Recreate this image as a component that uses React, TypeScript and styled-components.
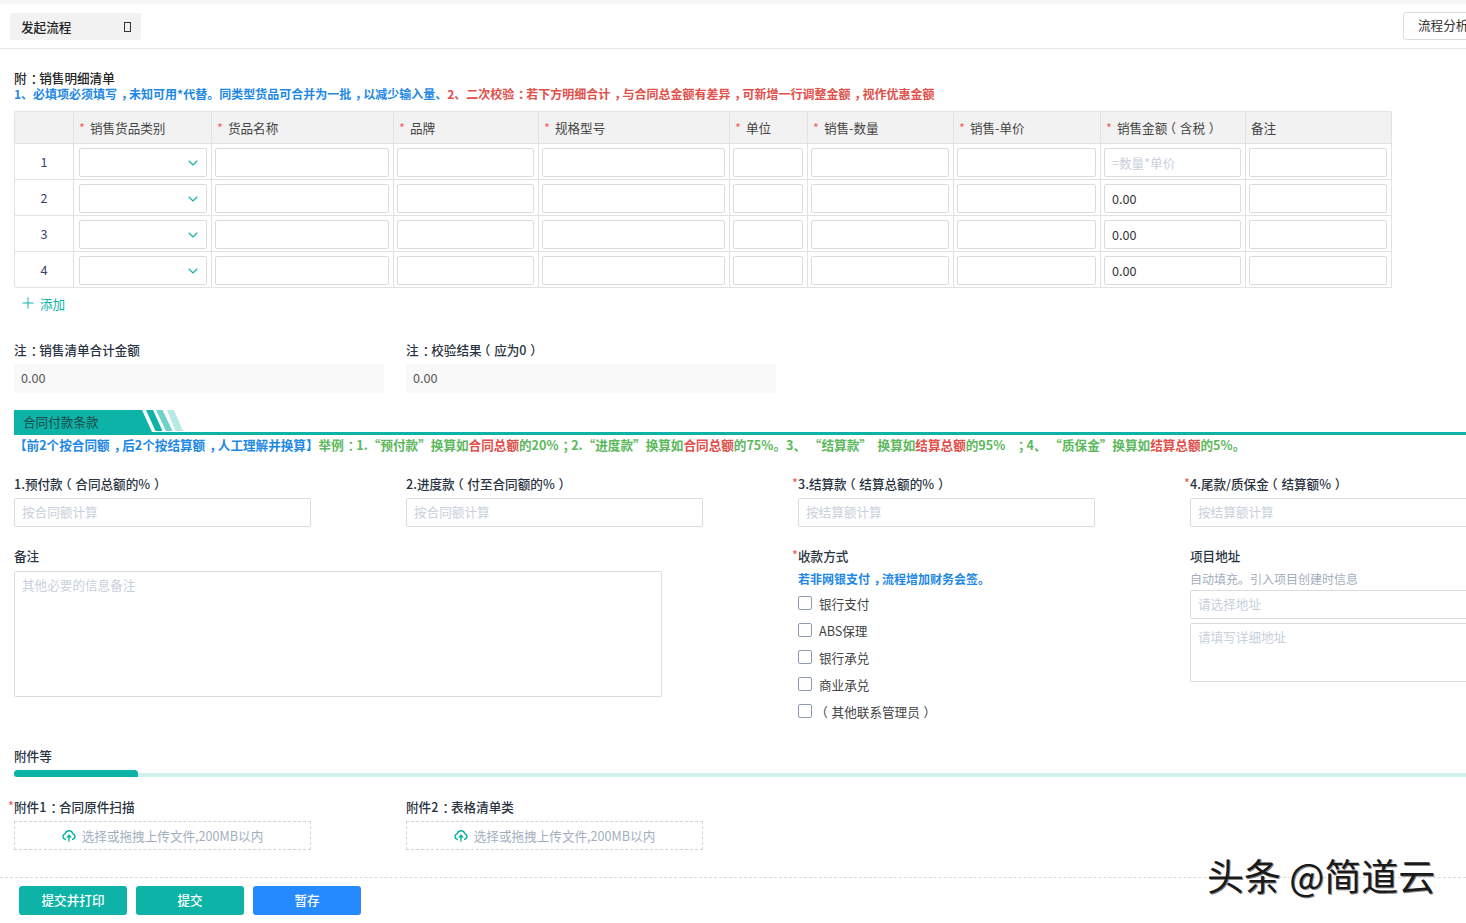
import React from 'react';
import styled, { createGlobalStyle } from 'styled-components';
import { ChevronDown, Plus } from 'lucide-react';

const FONT = '"Noto Sans CJK SC", "Noto Sans", sans-serif';
const TEAL = '#0db3a6';

const GlobalStyle = createGlobalStyle`
  html, body {
    margin: 0;
    padding: 0;
    background: #fff;
    overflow: hidden;
  }
  * {
    box-sizing: border-box;
  }
  body {
    font-family: ${FONT};
    font-size: 12.6px;
    color: #2a3341;
  }
`;

const Page = styled.div`
  position: relative;
  width: 1466px;
  height: 923px;
  overflow: hidden;
  border-top: 4px solid #f7f7f7;
`;

const TopBar = styled.div`
  display: flex;
  justify-content: space-between;
  align-items: flex-start;
  height: 45px;
  padding: 9px 0 0 10px;
  border-bottom: 1px solid #e8e8e8;
  overflow: hidden;
`;

const ActiveTab = styled.div`
  display: flex;
  align-items: center;
  justify-content: space-between;
  width: 131px;
  height: 27px;
  padding: 0 10px 0 11px;
  background: #f2f2f2;
  border-radius: 2px;
  font-weight: 500;
  color: #222;
`;

const TabGlyph = styled.span`
  width: 7px;
  height: 10px;
  border: 1px solid #333;
`;

const AnalysisButton = styled.div`
  flex: none;
  width: 80px;
  height: 28px;
  margin: -1px -17px 0 0;
  padding-left: 14px;
  border: 1px solid #dcdcdc;
  border-radius: 3px 0 0 3px;
  line-height: 24px;
  white-space: nowrap;
  overflow: hidden;
  color: #333;
`;

const Body = styled.div`
  padding: 20px 0 0 14px;
`;

const SectionTitle = styled.div`
  height: 17px;
  line-height: 17px;
  font-weight: 500;
  color: #222;
`;

const Note = styled.div`
  height: 16px;
  line-height: 16px;
  font-size: 12px;
  font-weight: 700;
  white-space: nowrap;
  color: #e04f4a;
`;

const Blue = styled.span`
  color: #1e88e5;
`;

const Green = styled.span`
  color: #5cb85c;
`;

const Red = styled.span`
  color: #e04f4a;
`;

// full-width punctuation sits centred in its cell in the reference
const Mark = styled.span<{ $shift: number }>`
  display: inline-block;
  transform: translateX(${(p) => p.$shift}em);
`;

const Table = styled.div`
  display: grid;
  grid-template-columns: 59px 138px 182px 145px 191px 78px 146px 147px 145px 146px;
  grid-template-rows: 32px repeat(4, 36px);
  width: 1378px;
  margin-top: 9px;
  border-top: 1px solid #e2e2e2;
  border-left: 1px solid #e2e2e2;
  border-radius: 2px;
`;

const HeadCell = styled.div`
  display: flex;
  align-items: center;
  padding-left: 5px;
  background: #f2f2f2;
  border-right: 1px solid #e2e2e2;
  border-bottom: 1px solid #e2e2e2;
  white-space: nowrap;
  color: #444;
`;

const HeadStar = styled.span`
  color: #ef5f5a;
  margin-right: 5px;
`;

const IndexCell = styled.div`
  display: flex;
  align-items: center;
  justify-content: center;
  border-right: 1px solid #e2e2e2;
  border-bottom: 1px solid #e2e2e2;
  color: #3a3f6b;
`;

const InputCell = styled.div<{ $first?: boolean }>`
  padding: 4px 4px 0 ${(p) => (p.$first ? 5 : 3)}px;
  border-right: 1px solid #e2e2e2;
  border-bottom: 1px solid #e2e2e2;
`;

const CellBox = styled.div<{ $muted?: boolean }>`
  display: flex;
  align-items: center;
  justify-content: space-between;
  height: 29px;
  padding: 0 7px;
  border: 1px solid #dcdcdc;
  border-radius: 2px;
  color: ${(p) => (p.$muted ? '#c8d0dc' : '#333')};
`;

const SelectArrow = styled(ChevronDown)`
  margin-right: -2px;
`;

const AddRow = styled.div`
  display: flex;
  align-items: center;
  gap: 3px;
  height: 30px;
  padding-left: 5px;
  color: ${TEAL};
`;

const TotalsRow = styled.div`
  display: flex;
  gap: 22px;
  margin-top: 22px;
`;

const TotalField = styled.div`
  width: 370px;
`;

const Label = styled.div<{ $required?: boolean }>`
  position: relative;
  height: 20px;
  line-height: 20px;
  font-weight: 500;
  white-space: nowrap;
  color: #2a3341;

  &::before {
    content: ${(p) => (p.$required ? "'*'" : 'none')};
    position: absolute;
    left: -6px;
    top: -1px;
    color: #ef4f4a;
    font-weight: 400;
  }
`;

const ReadOnly = styled.div`
  height: 29px;
  margin-top: 4px;
  padding-left: 7px;
  line-height: 28px;
  background: #f9f9f9;
  color: #555;
`;

const BandRow = styled.div`
  display: flex;
  align-items: flex-start;
  height: 25px;
  margin-top: 17px;
  border-bottom: 3px solid ${TEAL};
`;

const BandTitle = styled.div`
  width: 138px;
  height: 22px;
  padding-left: 9px;
  line-height: 24px;
  background: ${TEAL};
  clip-path: polygon(0 0, 128px 0, 138px 100%, 0 100%);
  color: #1d4a4a;
`;

const BandStripes = styled.svg`
  flex: none;
  width: 40px;
  height: 22px;
  margin-left: -8px;
`;

const Hint = styled.div`
  height: 20px;
  line-height: 20px;
  font-weight: 700;
  white-space: pre;
`;

const FieldGrid = styled.div`
  display: grid;
  grid-template-columns: repeat(4, 392px);
  margin-top: 19px;
  width: 1568px;
`;

const TextBox = styled.div<{ $wide?: boolean }>`
  width: ${(p) => (p.$wide ? 400 : 297)}px;
  height: 29px;
  margin-top: 4px;
  padding-left: 7px;
  line-height: 26px;
  border: 1px solid #dcdcdc;
  border-radius: 2px;
  color: #c8d0dc;
`;

const RemarksRow = styled.div`
  display: grid;
  grid-template-columns: repeat(4, 392px);
  margin-top: 19px;
  width: 1568px;
  height: 180px;
`;

const AreaBox = styled.div<{ $w: number; $h: number }>`
  width: ${(p) => p.$w}px;
  height: ${(p) => p.$h}px;
  padding: 3px 7px;
  line-height: 20px;
  border: 1px solid #dcdcdc;
  border-radius: 2px;
  color: #c8d0dc;
  white-space: nowrap;
`;

const RemarksAreaWrap = styled.div`
  margin-top: 5px;
`;

const BlueHint = styled.div`
  height: 16px;
  margin-top: 5px;
  line-height: 16px;
  font-size: 12px;
  font-weight: 700;
  color: #1e88e5;
`;

const GreyHint = styled.div`
  height: 16px;
  margin-top: 5px;
  line-height: 16px;
  font-size: 12px;
  color: #a3aebd;
`;

const CheckList = styled.div`
  display: flex;
  flex-direction: column;
  gap: 9px;
  margin-top: 7px;
`;

const CheckRow = styled.div`
  display: flex;
  align-items: center;
  gap: 7px;
  height: 18px;
  color: #444;
  white-space: nowrap;
`;

const CheckBox = styled.span`
  flex: none;
  width: 14px;
  height: 14px;
  border: 1px solid #8f9bb3;
  border-radius: 2px;
`;

const AddressInput = styled(TextBox)`
  margin-top: 3px;
`;

const AddressArea = styled(AreaBox)`
  margin-top: 4px;
`;

const AttachTitle = styled(Label)`
  margin-top: 20px;
`;

const AttachBand = styled.div`
  height: 7px;
  margin-top: 4px;
  background: linear-gradient(to bottom, transparent 3px, #cff0ec 3px);
`;

const AttachBandFill = styled.div`
  width: 124px;
  height: 7px;
  background: ${TEAL};
  border-radius: 4px 4px 0 4px;
`;

const UploadGrid = styled.div`
  display: grid;
  grid-template-columns: repeat(2, 392px);
  margin-top: 20px;
`;

const UploadBox = styled.div`
  display: flex;
  align-items: center;
  justify-content: center;
  gap: 6px;
  width: 297px;
  height: 29px;
  margin-top: 4px;
  border: 1px dashed #d4d4d4;
  color: #a3aebd;
`;

const Footer = styled.div`
  display: flex;
  gap: 9px;
  margin-top: 27px;
  padding: 8px 0 0 19px;
  border-top: 1px dashed #dcdcdc;
`;

const ActionButton = styled.div<{ $blue?: boolean }>`
  width: 108px;
  height: 29px;
  line-height: 27px;
  text-align: center;
  border-radius: 3px;
  font-weight: 500;
  color: #fff;
  background: ${(p) => (p.$blue ? '#2589ff' : TEAL)};
`;

const Watermark = styled.div`
  position: absolute;
  left: 1207px;
  top: 846px;
  font-size: 37px;
  line-height: 50px;
  white-space: nowrap;
  color: #1a1a1a;
  text-shadow: 1px 1px 0 #888, -1px -1px 0 #fff;
`;

const columns = [
  { title: '销售货品类别', required: true },
  { title: '货品名称', required: true },
  { title: '品牌', required: true },
  { title: '规格型号', required: true },
  { title: '单位', required: true },
  { title: '销售-数量', required: true },
  { title: '销售-单价', required: true },
  { title: '销售金额（含税）', required: true },
  { title: '备注', required: false },
];

const rows = [1, 2, 3, 4];
const payMethods = ['银行支付', 'ABS保理', '银行承兑', '商业承兑', '（其他联系管理员）'];

const payFields = [
  { label: '1.预付款（合同总额的%）', placeholder: '按合同额计算', required: false },
  { label: '2.进度款（付至合同额的%）', placeholder: '按合同额计算', required: false },
  { label: '3.结算款（结算总额的%）', placeholder: '按结算额计算', required: true },
  { label: '4.尾款/质保金（结算额%）', placeholder: '按结算额计算', required: true },
];

const markShift: Record<string, number> = { '，': 0.32, '：': 0.32, '；': 0.32, '（': -0.3, '）': 0.3 };

function Txt({ children }: { children: string }) {
  return (
    <>
      {children.split(/([，：；（）])/).map((part, i) =>
        markShift[part] ? (
          <Mark key={i} $shift={markShift[part]}>
            {part}
          </Mark>
        ) : (
          part
        ),
      )}
    </>
  );
}

function UploadIcon() {
  return (
    <svg width="14" height="14" viewBox="0 0 14 14" fill="none" stroke={TEAL} strokeWidth="1.4">
      <path d="M4 10.2H3.4a2.7 2.7 0 0 1-.3-5.3 4 4 0 0 1 7.8 0 2.7 2.7 0 0 1-.3 5.3H10" />
      <path d="M7 12.5V6.5M4.8 8.5 7 6.3l2.2 2.2" />
    </svg>
  );
}

function AmountCell({ row }: { row: number }) {
  return (
    <InputCell>
      {row === 1 ? <CellBox $muted>=数量*单价</CellBox> : <CellBox>0.00</CellBox>}
    </InputCell>
  );
}

export default function App() {
  return (
    <>
      <GlobalStyle />
      <Page>
        <TopBar>
          <ActiveTab>
            发起流程
            <TabGlyph />
          </ActiveTab>
          <AnalysisButton>流程分析</AnalysisButton>
        </TopBar>

        <Body>
          <SectionTitle>
            <Txt>附：销售明细清单</Txt>
          </SectionTitle>
          <Note>
            <Blue>
              <Txt>1、必填项必须填写，未知可用*代替。同类型货品可合并为一批，以减少输入量、</Txt>
            </Blue>
            <Txt>2、二次校验：若下方明细合计，与合同总金额有差异，可新增一行调整金额，视作优惠金额</Txt>
          </Note>

          <Table>
            <HeadCell />
            {columns.map((col) => (
              <HeadCell key={col.title}>
                {col.required && <HeadStar>*</HeadStar>}
                <Txt>{col.title}</Txt>
              </HeadCell>
            ))}
            {rows.map((row) => (
              <React.Fragment key={row}>
                <IndexCell>{row}</IndexCell>
                <InputCell $first>
                  <CellBox>
                    <span />
                    <SelectArrow size={16} color={TEAL} strokeWidth={1.6} />
                  </CellBox>
                </InputCell>
                {columns.slice(1, 7).map((col) => (
                  <InputCell key={col.title}>
                    <CellBox />
                  </InputCell>
                ))}
                <AmountCell row={row} />
                <InputCell>
                  <CellBox />
                </InputCell>
              </React.Fragment>
            ))}
          </Table>

          <AddRow>
            <Plus size={18} strokeWidth={1.3} />
            添加
          </AddRow>

          <TotalsRow>
            <TotalField>
              <Label>
                <Txt>注：销售清单合计金额</Txt>
              </Label>
              <ReadOnly>0.00</ReadOnly>
            </TotalField>
            <TotalField>
              <Label>
                <Txt>注：校验结果（应为0）</Txt>
              </Label>
              <ReadOnly>0.00</ReadOnly>
            </TotalField>
          </TotalsRow>

          <BandRow>
            <BandTitle>合同付款条款</BandTitle>
            <BandStripes viewBox="0 0 40 22">
              <path d="M2 0h7l9.5 21h-7z" fill={TEAL} />
              <path d="M12 0h6.5l10 21h-6.5z" fill="#6dd2ca" />
              <path d="M23 0h7l9 21h-7.5z" fill="#b7e8e4" />
            </BandStripes>
          </BandRow>
          <Hint>
            <Blue>
              <Txt>【前2个按合同额，后2个按结算额，人工理解并换算】</Txt>
            </Blue>
            <Green>
              <Txt>举例：1.“预付款”换算如</Txt>
            </Green>
            <Red>合同总额</Red>
            <Green>
              <Txt>的20%；2.“进度款”换算如</Txt>
            </Green>
            <Red>合同总额</Red>
            <Green>的75%。3、 “结算款”  换算如</Green>
            <Red>结算总额</Red>
            <Green>
              <Txt>的95%   ；4、 “质保金”换算如</Txt>
            </Green>
            <Red>结算总额</Red>
            <Green>的5%。</Green>
          </Hint>

          <FieldGrid>
            {payFields.map((field) => (
              <div key={field.label}>
                <Label $required={field.required}>
                  <Txt>{field.label}</Txt>
                </Label>
                <TextBox>{field.placeholder}</TextBox>
              </div>
            ))}
          </FieldGrid>

          <RemarksRow>
            <div>
              <Label>备注</Label>
              <RemarksAreaWrap>
                <AreaBox $w={648} $h={126}>其他必要的信息备注</AreaBox>
              </RemarksAreaWrap>
            </div>
            <div />
            <div>
              <Label $required>收款方式</Label>
              <BlueHint>
                <Txt>若非网银支付，流程增加财务会签。</Txt>
              </BlueHint>
              <CheckList>
                {payMethods.map((method) => (
                  <CheckRow key={method}>
                    <CheckBox />
                    <span>
                      <Txt>{method}</Txt>
                    </span>
                  </CheckRow>
                ))}
              </CheckList>
            </div>
            <div>
              <Label>项目地址</Label>
              <GreyHint>自动填充。引入项目创建时信息</GreyHint>
              <AddressInput $wide>请选择地址</AddressInput>
              <AddressArea $w={400} $h={59}>请填写详细地址</AddressArea>
            </div>
          </RemarksRow>

          <AttachTitle>附件等</AttachTitle>
          <AttachBand>
            <AttachBandFill />
          </AttachBand>

          <UploadGrid>
            <div>
              <Label $required>
                <Txt>附件1：合同原件扫描</Txt>
              </Label>
              <UploadBox>
                <UploadIcon />
                选择或拖拽上传文件,200MB以内
              </UploadBox>
            </div>
            <div>
              <Label>
                <Txt>附件2：表格清单类</Txt>
              </Label>
              <UploadBox>
                <UploadIcon />
                选择或拖拽上传文件,200MB以内
              </UploadBox>
            </div>
          </UploadGrid>
        </Body>

        <Footer>
          <ActionButton>提交并打印</ActionButton>
          <ActionButton>提交</ActionButton>
          <ActionButton $blue>暂存</ActionButton>
        </Footer>

        <Watermark>头条 @简道云</Watermark>
      </Page>
    </>
  );
}
